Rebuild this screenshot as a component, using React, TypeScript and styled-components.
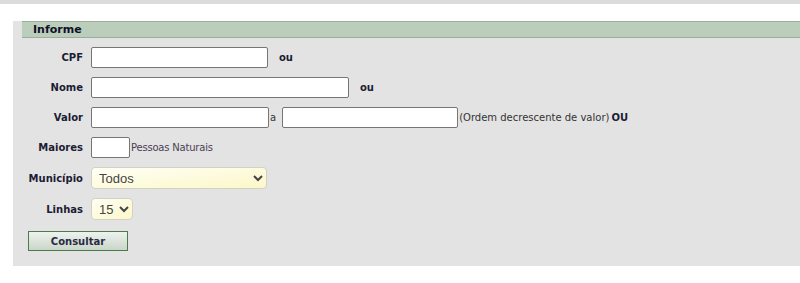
import styled, { createGlobalStyle } from 'styled-components';

const GlobalStyle = createGlobalStyle`
    body {
        margin: 0;
        background: #fff;
        font-family: 'DejaVu Sans', Verdana, sans-serif;
        font-size: 11px;
        color: #1c1c33;
    }
`;

const TopStrip = styled.div`
    height: 4px;
    background: #dcdcdc;
`;

const Panel = styled.div`
    margin: 26px 0 0 13px;
    background: #e3e3e3;
    padding: 0 0 15px 0;
`;

const Header = styled.div`
    margin: -9px 0 0 9px;
    height: 15px;
    line-height: 15px;
    background: #bbcdbb;
    border-top: 1px solid #9aae9a;
    border-bottom: 1px solid #9aae9a;
    padding-left: 11px;
    font-weight: bold;
    font-size: 11px;
    color: #10102a;
`;

const Form = styled.div`
    display: flex;
    flex-direction: column;
    gap: 9px;
    padding-top: 9px;
`;

const Row = styled.div`
    display: flex;
    align-items: center;
    gap: 8px;
`;

const Label = styled.span`
    width: 70px;
    text-align: right;
    font-weight: bold;
    font-size: 10px;
`;

const Field = styled.div`
    display: flex;
    align-items: center;
`;

const Input = styled.input<{ $w: number }>`
    box-sizing: border-box;
    width: ${(p) => p.$w}px;
    height: 21px;
    border: 1px solid #767676;
    border-radius: 2px;
    background: #fff;
    padding: 1px 2px;
    font-size: 12px;
`;

const Or = styled.span<{ $tight?: boolean }>`
    font-weight: bold;
    font-size: 10px;
    margin-left: ${(p) => (p.$tight ? '0' : '11px')};
`;

const Note = styled.span<{ $gap?: number }>`
    font-size: 10px;
    color: #333;
    margin: 0 ${(p) => p.$gap ?? 2}px 0 1px;
`;

const Hint = styled.span`
    font-size: 10px;
    color: #4a3f55;
    margin-left: 1px;
    letter-spacing: -0.2px;
`;

const Select = styled.select<{ $w: number }>`
    box-sizing: border-box;
    width: ${(p) => p.$w}px;
    height: 22px;
    border: 1px solid #d2d2c4;
    border-radius: 4px;
    background: linear-gradient(to bottom right, #fffff6, #fcf7c8);
    font-family: 'Liberation Sans', Arial, sans-serif;
    font-size: 13px;
    color: #444;
    padding: 0 0 0 3px;
`;

const ButtonRow = styled.div`
    padding-left: 15px;
    padding-top: 11px;
`;

const Button = styled.button`
    width: 100px;
    height: 20px;
    border: 1px solid #4d7a4d;
    background: linear-gradient(to bottom, #eef2ee, #c9d6c9);
    font-family: 'DejaVu Sans', Verdana, sans-serif;
    font-weight: bold;
    font-size: 10px;
    color: #2a2a44;
    padding: 0;
`;

export default function App() {
    return (
        <>
            <GlobalStyle />
            <TopStrip />
            <Panel>
                <Header>Informe</Header>
                <Form>
                    <Row>
                        <Label>CPF</Label>
                        <Field>
                            <Input $w={177} />
                            <Or>ou</Or>
                        </Field>
                    </Row>
                    <Row>
                        <Label>Nome</Label>
                        <Field>
                            <Input $w={258} />
                            <Or>ou</Or>
                        </Field>
                    </Row>
                    <Row>
                        <Label>Valor</Label>
                        <Field>
                            <Input $w={178} />
                            <Note $gap={6}>a</Note>
                            <Input $w={176} />
                            <Note>(Ordem decrescente de valor)</Note>
                            <Or $tight>OU</Or>
                        </Field>
                    </Row>
                    <Row>
                        <Label>Maiores</Label>
                        <Field>
                            <Input $w={39} />
                            <Hint>Pessoas Naturais</Hint>
                        </Field>
                    </Row>
                    <Row>
                        <Label>Município</Label>
                        <Select $w={176} defaultValue="todos">
                            <option value="todos">Todos</option>
                        </Select>
                    </Row>
                    <Row>
                        <Label>Linhas</Label>
                        <Select $w={42} defaultValue="15">
                            <option value="15">15</option>
                        </Select>
                    </Row>
                </Form>
                <ButtonRow>
                    <Button>Consultar</Button>
                </ButtonRow>
            </Panel>
        </>
    );
}
